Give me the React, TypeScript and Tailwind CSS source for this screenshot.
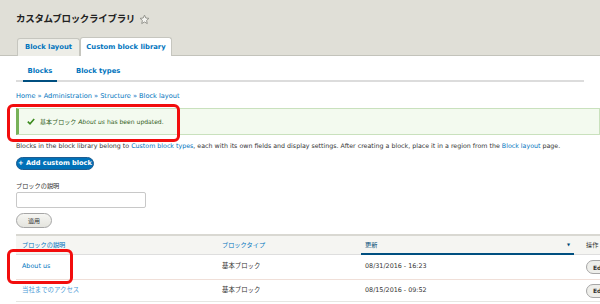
import React from 'react';

const font = "font-['DejaVu_Sans','Noto_Sans_CJK_JP',sans-serif]";

const Check = () => (
  <svg width="8" height="7" viewBox="0 0 8 7" className="shrink-0">
    <path d="M0.8 3.6 L3 5.8 L7.2 1" fill="none" stroke="#3b8a1e" strokeWidth="1.6" />
  </svg>
);

const Star = () => (
  <svg width="11" height="11" viewBox="0 0 24 24">
    <path
      d="M12 2.5l2.9 6.3 6.8.7-5.1 4.6 1.5 6.8L12 17.4l-6.1 3.5 1.5-6.8-5.1-4.6 6.8-.7z"
      fill="#f4f4f0"
      stroke="#8e8e88"
      strokeWidth="2"
      strokeLinejoin="round"
    />
  </svg>
);

const EditButton = () => (
  <span className="flex items-center w-[30px] h-[14px] pl-[6px] rounded-full border border-[#a6a6a6] bg-[#eeeeea] text-[6px] font-bold">
    Edit
  </span>
);

const App = () => {
  return (
    <div className={`relative w-[600px] h-[304px] overflow-hidden bg-white text-[#333] ${font}`}>
      {/* Header */}
      <header className="h-[56px] bg-[#e0dfd7] border-b border-[#c3c3bb] flex flex-col">
        <div className="flex items-center gap-[4px] pl-[16px] pt-[11px] h-[27px]">
          <h1 className="text-[9.5px] font-bold text-[#222] tracking-[-0.3px]">カスタムブロックライブラリ</h1>
          <Star />
        </div>
        <div className="flex items-end pl-[17px] mt-auto -mb-px">
          <a href="#" className="h-[18px] w-[63px] flex items-center justify-center bg-[#ededE7] border border-b-0 border-[#c6c6bf] rounded-t-[3px] text-[6.8px] font-bold text-[#0074bd]">
            Block layout
          </a>
          <a href="#" className="h-[19px] w-[92px] flex items-center justify-center bg-white border border-b-0 border-[#c6c6bf] rounded-t-[3px] text-[6.8px] font-bold text-[#0074bd]">
            Custom block library
          </a>
        </div>
      </header>

      {/* Secondary tabs */}
      <nav className="mx-[16px] h-[26px] border-b-2 border-[#dcdcdc] flex items-end">
        <a href="#" className="ml-[7px] w-[34px] h-[19px] -mb-[2px] border-b-2 border-[#004f80] text-[6.8px] font-bold text-[#0074bd] flex items-center justify-center">
          Blocks
        </a>
        <a href="#" className="ml-[19px] h-[19px] -mb-[2px] pb-[2px] text-[6.8px] font-bold text-[#0074bd] flex items-center">
          Block types
        </a>
      </nav>

      <main className="px-[16px]">
        <div className="mt-[10px] h-[10px] flex items-center text-[6.6px] text-[#0074bd]">
          Home » Administration » Structure » Block layout
        </div>

        <div className="mt-[6px] -mr-[16px] h-[27px] bg-[#f3faef] border border-l-[3px] border-[#c9e1bd] border-l-[#77b259] flex items-center gap-[5px] pl-[8px] text-[6.05px] text-[#325e1c]">
          <Check />
          <span>
            基本ブロック <em>About us</em> has been updated.
          </span>
        </div>

        <p className="mt-[6px] h-[10px] flex items-center text-[6.3px] whitespace-nowrap">
          <span>
            Blocks in the block library belong to <a href="#" className="text-[#0074bd]">Custom block types</a>, each with its own fields and display settings. After creating a block, place it in a region from the{' '}
            <a href="#" className="text-[#0074bd]">Block layout</a> page.
          </span>
        </p>

        <button className="mt-[6px] h-[13px] w-[78px] rounded-full bg-[#0071b8] border border-[#1e5c90] text-white text-[6.6px] font-bold flex items-center justify-center">
          + Add custom block
        </button>

        <label className="block mt-[11px] h-[10px] leading-[10px] text-[6.2px]">ブロックの説明</label>
        <input className="block mt-[1px] w-[130px] h-[16px] border border-[#c8c8c8] rounded-[2px] bg-white" />
        <button className="mt-[5px] w-[36px] h-[15px] rounded-full border border-[#a6a6a6] bg-gradient-to-b from-[#f6f6f3] to-[#e4e4de] text-[6px] text-[#333] flex items-center justify-center">
          適用
        </button>

        {/* Table */}
        <div className="mt-[6px] -mr-[16px] overflow-hidden">
          <div className="h-[21px] bg-[#f5f5f2] border-t-2 border-[#d9d8d2] border-b border-b-[#dedede] flex items-stretch text-[6.2px] text-[#0074bd]">
            <div className="w-[206px] shrink-0 pl-[6px] flex items-center">ブロックの説明</div>
            <div className="w-[139px] shrink-0 flex items-center">ブロックタイプ</div>
            <div className="w-[213px] shrink-0 pl-[4px] pr-[4px] flex items-center justify-between border-b-2 border-[#004f80] -mb-px">
              <span className="text-[#004875]">更新</span>
              <span className="text-[4px] text-[#004875]">▼</span>
            </div>
            <div className="shrink-0 pl-[12px] flex items-center text-[#333] whitespace-nowrap">操作</div>
          </div>

          <div className="h-[25px] flex items-center border-b border-[#f0dfd8] text-[6.4px]">
            <div className="w-[206px] shrink-0 pl-[6px] text-[#0074bd]">About us</div>
            <div className="w-[139px] shrink-0">基本ブロック</div>
            <div className="w-[213px] shrink-0 pl-[4px]">08/31/2016 - 16:23</div>
            <div className="shrink-0 pl-[12px]">
              <EditButton />
            </div>
          </div>

          <div className="h-[22px] flex items-center border-b border-[#e6e6e2] text-[6.4px]">
            <div className="w-[206px] shrink-0 pl-[6px] text-[#4c9ad6]">当社までのアクセス</div>
            <div className="w-[139px] shrink-0">基本ブロック</div>
            <div className="w-[213px] shrink-0 pl-[4px]">08/15/2016 - 09:52</div>
            <div className="shrink-0 pl-[12px]">
              <EditButton />
            </div>
          </div>
        </div>
      </main>

      {/* Annotation highlights */}
      <div className="absolute left-[7px] top-[104px] w-[173px] h-[38px] border-[3px] border-[#f20d0d] rounded-[6px]" />
      <div className="absolute left-[7px] top-[249px] w-[66px] h-[35px] border-[3px] border-[#f20d0d] rounded-[6px]" />
    </div>
  );
};

export default App;
